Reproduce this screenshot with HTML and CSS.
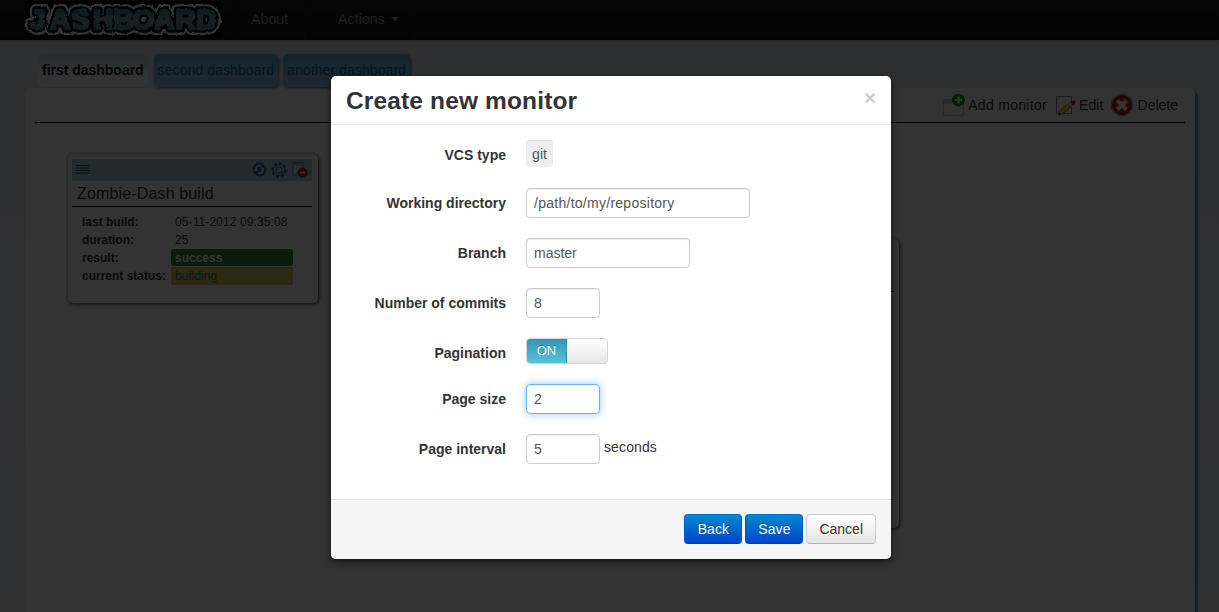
FILE: index.html
```html
<!DOCTYPE html>
<html lang="en">
<head>
<meta charset="utf-8">
<title>Jashboard</title>
<link rel="stylesheet" href="styles.css">
</head>
<body>
<header class="navbar">
  <svg class="logo" width="198" height="36" viewBox="0 0 198 36" role="img" aria-label="Jashboard">
    <defs>
      <linearGradient id="ice" x1="0" y1="0" x2="0" y2="1"><stop offset="0" stop-color="#2d7890"/><stop offset=".5" stop-color="#7ba0a8"/><stop offset="1" stop-color="#358099"/></linearGradient>
      <filter id="rough"><feTurbulence type="fractalNoise" baseFrequency=".2" numOctaves="2" seed="4"/><feDisplacementMap in="SourceGraphic" scale="3" xChannelSelector="R" yChannelSelector="G"/></filter>
    </defs>
    <rect width="198" height="36" fill="#000"/>
    <g class="logo-text" stroke-linejoin="round" filter="url(#rough)">
      <text x="5 25 46 68 88.500 107.500 129 150.500 171" y="28" stroke="#fff" stroke-width="12">JASHBOARD</text>
      <text x="5 25 46 68 88.500 107.500 129 150.500 171" y="28" stroke="#000" stroke-width="7.500">JASHBOARD</text>
      <text x="5 25 46 68 88.500 107.500 129 150.500 171" y="28" fill="url(#ice)" stroke="url(#ice)" stroke-width="2.600">JASHBOARD</text>
    </g>
  </svg>
  <nav class="nav">
    <a class="nav-item about">About</a>
    <a class="nav-item actions">Actions <span class="caret"></span></a>
  </nav>
</header>
<main class="dashboards">
  <div class="tabs">
    <a class="tab active">first dashboard</a>
    <a class="tab">second dashboard</a>
    <a class="tab">another dashboard</a>
  </div>
  <section class="panel">
    <div class="toolbar">
      <a class="tool"><svg width="23" height="23" viewBox="0 0 23 23"><rect x="1.500" y="5.500" width="20" height="16" rx="1.500" fill="#fff" stroke="#ccc"/><path d="M2 6h19v3c-8 0-14 0-19 2z" fill="#d5d5d5"/><circle cx="16.500" cy="6" r="6" fill="#159515" stroke="#087008" stroke-width=".7"/><path d="M16.500 2.500v7M13 6h7" stroke="#fff" stroke-width="2.200"/></svg>Add monitor</a>
      <a class="tool edit"><svg width="21" height="22" viewBox="0 0 21 22"><rect x="1.500" y="2.500" width="15" height="17" fill="#fff" stroke="#888"/><path d="M3.500 21l1-3.500L15 8l3 3L7 20.500z" fill="#e8c520" stroke="#776000" stroke-width=".8"/><path d="M5 18.500l11-9" stroke="#fff27a"/><path d="M13 9.500l2.500-2.200 3 3-2.500 2.200z" fill="#dfe5ea"/><path d="M15 8l2-1.500 3.500.5-.5 3-1.800 1.400z" fill="#cc1717"/><path d="M3.500 21l.8-2.500 1.600 1.500z" fill="#333"/></svg>Edit</a>
      <a class="tool delete"><svg width="24" height="24" viewBox="0 0 24 24"><circle cx="12" cy="12" r="11" fill="#ddd" stroke="#999"/><circle cx="12" cy="12" r="9.400" fill="#c9151b" stroke="#8d0000"/><path d="M7.500 7.500l9 9M16.500 7.500l-9 9" stroke="#fff" stroke-width="4"/></svg>Delete</a>
    </div>
    <div class="canvas">
      <article class="monitor build">
        <div class="monitor-bar">
          <svg width="14" height="9" viewBox="0 0 14 9"><path d="M0 .5h14M0 3h14M0 5.500h14M0 8h14" stroke="#23607a" stroke-width="1.100"/></svg>
          <div class="monitor-icons">
            <svg width="15" height="15" viewBox="0 0 15 15"><circle cx="7.500" cy="7.500" r="6.800" fill="#3268a8" stroke="#7898b8"/><path d="M4 9A4 4 0 0 1 9.500 4M11 6A4 4 0 0 1 6 11" fill="none" stroke="#d5e7f5" stroke-width="2"/><path d="M8.500 5.500h4L10.500 9z" fill="#d5e7f5"/><path d="M2.200 9h4L4.500 5.500z" fill="#d5e7f5"/></svg>
            <svg width="16" height="16" viewBox="0 0 16 16"><circle cx="8" cy="8" r="6.600" fill="none" stroke="#245e91" stroke-width="2.400" stroke-dasharray="2.600 2.584"/><circle cx="8" cy="8" r="4.300" fill="none" stroke="#245e91" stroke-width="3.400"/><circle cx="8" cy="8" r="4.300" fill="none" stroke="#8ccbe8" stroke-width="2"/></svg>
            <svg width="17" height="17" viewBox="0 0 17 17"><path d="M1 1.500h12M2 3v11h10V3z" fill="#b7d2e6" stroke="#6890ad" stroke-width="1.200"/><path d="M4 4v9M7 4v9" stroke="#fff"/><circle cx="11.500" cy="11.500" r="4.600" fill="#d42115" stroke="#8d0d05" stroke-width=".7"/><path d="M8.800 11.500h5.400" stroke="#fff" stroke-width="1.800"/></svg>
          </div>
        </div>
        <h4 class="monitor-title">Zombie-Dash build</h4>
        <dl class="facts">
          <dt>last build:</dt><dd class="date">05-11-2012 09:35:08</dd>
          <dt>duration:</dt><dd>25</dd>
          <dt>result:</dt><dd class="success">success</dd>
          <dt>current status:</dt><dd class="building">building</dd>
        </dl>
      </article>
      <article class="monitor vcs"><div class="vcs-rule"></div></article>
    </div>
  </section>
</main>
<div class="backdrop"></div>
<div class="modal">
  <div class="modal-header"><h3>Create new monitor</h3><a class="close">×</a></div>
  <form class="modal-body">
    <div class="row vcs-row"><label>VCS type</label><span class="chip">git</span></div>
    <div class="row"><label>Working directory</label><div class="field wide">/path/to/my/repository</div></div>
    <div class="row"><label>Branch</label><div class="field medium">master</div></div>
    <div class="row"><label>Number of commits</label><div class="field">8</div></div>
    <div class="row switch-row"><label>Pagination</label><div class="switch"><span class="switch-on">ON</span></div></div>
    <div class="row"><label>Page size</label><div class="field focused">2</div></div>
    <div class="row"><label>Page interval</label><div class="field">5</div><span class="unit">seconds</span></div>
  </form>
  <div class="modal-footer"><a class="btn primary">Back</a><a class="btn primary">Save</a><a class="btn">Cancel</a></div>
</div>
</body>
</html>
```
FILE: styles.css
```css
* { box-sizing: border-box; }
body { margin: 0; height: 612px; overflow: hidden; font: 14px/20px "Liberation Sans", Arial, sans-serif; color: #333; background: linear-gradient(#e3e8f0 40px, #f2f5fa 612px); position: relative; }
.navbar { height: 40px; display: flex; background: linear-gradient(#222, #111); padding-left: 25px; box-shadow: 0 1px 3px rgba(0,0,0,.25); }
.logo { margin-top: 1px; }
.logo-text { font: bold 28px "Liberation Sans", Arial, sans-serif; }
.nav { display: flex; margin-left: 13px; }
.nav-item { padding: 9px 15px 11px; color: #999; border-left: 1px solid #111; border-right: 1px solid #222; }
.about { width: 69px; padding-left: 14px; letter-spacing: .15px; }
.actions { padding-left: 32px; letter-spacing: .15px; }
.caret { display: inline-block; margin-left: 2px; vertical-align: 3px; border: 4px solid transparent; border-top-color: #999; border-bottom: 0; }
.dashboards { padding: 14px 24px 0 25px; height: 572px; }
.tabs { display: flex; gap: 5px; padding-left: 13px; height: 34px; position: relative; z-index: 1; }
.tab { height: 33px; padding: 6px 4px; border-radius: 5px; color: #0079b5; background: linear-gradient(#62b2dc, #9ac4df); box-shadow: 1px 1px 3px #2b83ac; letter-spacing: .08px; white-space: nowrap; }
.tab.active { color: #222; font-weight: bold; background: linear-gradient(#c2dcea, #fff 26px); box-shadow: none; letter-spacing: -.02px; margin-right: 1px; }
.panel { height: 540px; background: #fff; border-radius: 6px; box-shadow: 3px 3px 2px #4ba1c0; padding: 0 10px; }
.toolbar { height: 35px; border-bottom: 1px solid #000; display: flex; justify-content: flex-end; gap: 9px; padding: 4px 7px 0 0; }
.tool { display: flex; align-items: center; gap: 2px; height: 26px; letter-spacing: .3px; }
.tool:first-child { gap: 3px; margin-right: -1px; }
.tool svg { display: block; }
.tool.edit { gap: 3px; letter-spacing: .1px; }
.tool.delete { gap: 4px; margin-left: -3px; letter-spacing: 0; }
.canvas { position: relative; height: 489px; }
.monitor { position: absolute; background: #fff; border-radius: 5px; box-shadow: 1px 1px 4px #333; padding: 5px; }
.build { left: 33px; top: 31px; width: 250px; height: 149px; padding: 5px 6px 5px 4px; }
.monitor-bar { height: 22px; background: #acd3e3; display: flex; align-items: center; justify-content: space-between; padding: 0 4px 1px 4px; }
.monitor-icons { display: flex; align-items: center; gap: 4px; }
.monitor-title { font-size: 16px; font-weight: normal; line-height: 20px; height: 26px; margin: 0; padding: 3px 5px; border-bottom: 1px solid #000; white-space: nowrap; letter-spacing: .15px; }
.facts { display: grid; grid-template-columns: 89px 122px; grid-auto-rows: 18px; margin: 6px 0 0 10px; font-size: 12px; line-height: 18px; }
.facts dt { font-weight: bold; white-space: nowrap; }
.facts dd { margin: 0; padding-left: 4px; white-space: nowrap; }
.facts .date { letter-spacing: .1px; }
.facts .success { background: #398439; color: #fff; border-radius: 3px; font-weight: bold; height: 17px; }
.facts .building { background: #dfc65c; color: #23829c; letter-spacing: .12px; }
.vcs { left: 565px; top: 116px; width: 299px; height: 289px; }
.vcs-rule { border-bottom: 1px solid #000; height: 48px; }
.backdrop { position: absolute; inset: 0; background: #000; opacity: .8; z-index: 5; }
.modal { position: absolute; z-index: 6; left: 331px; top: 76px; width: 560px; height: 482.500px; background: #fff; border-radius: 5px; box-shadow: 0 3px 7px rgba(0,0,0,.6); overflow: hidden; display: flex; flex-direction: column; }
.modal-header { height: 49px; padding: 10px 15px 8px; border-bottom: 1px solid #eee; display: flex; justify-content: space-between; }
.modal-header h3 { margin: 0; font-size: 24.5px; line-height: 30px; letter-spacing: .14px; }
.close { font-size: 20px; font-weight: bold; line-height: 25px; color: #ccc; }
.modal-body { margin: 0; flex: 1; padding: 13px 15px; }
.row { display: flex; height: 30px; margin-bottom: 20px; }
.row label { width: 160px; margin-right: 20px; padding-top: 5px; text-align: right; font-weight: bold; line-height: 20px; }
.row.vcs-row { height: 29px; margin-bottom: 21px; }
.row.vcs-row label { padding-top: 7px; }
.chip { align-self: flex-start; margin-top: 2px; height: 27px; background: #eee; border-radius: 4px; padding: 4px 6px; color: #555; box-shadow: inset 0 1px 1px rgba(0,0,0,.07); letter-spacing: .1px; }
.field { width: 74px; height: 30px; padding: 4px 7px; border: 1px solid #ccc; border-radius: 4px; color: #555; box-shadow: inset 0 1px 1px rgba(0,0,0,.075); }
.field.wide { width: 224px; letter-spacing: .27px; }
.field.medium { width: 164px; }
.field.focused { border-color: #6cb4ef; box-shadow: inset 0 1px 1px rgba(0,0,0,.075), 0 0 8px rgba(82,168,236,.6); }
.unit { margin-left: 4px; padding-top: 3px; letter-spacing: .12px; }
.row.switch-row { margin-bottom: 16px; }
.switch { width: 82px; height: 26px; border: 1px solid #d4d4d4; border-radius: 4px; background: linear-gradient(#fff, #e6e6e6); overflow: hidden; }
.switch-on { display: block; width: 40px; height: 24px; border-right: 1px solid #318fae; background: linear-gradient(#2f96b4, #5bc0de); color: #fff; font-size: 13px; line-height: 24px; text-align: center; text-shadow: 0 -1px 0 rgba(0,0,0,.25); }
.modal-footer { height: 60px; border-top: 1px solid #e2e2e2; background: #f5f5f5; box-shadow: inset 0 1px 0 #fff; padding: 14px 15px 0; display: flex; justify-content: flex-end; gap: 3px; }
.btn { height: 30px; padding: 4px 12px; border: 1px solid #ccc; border-bottom-color: #b3b3b3; border-radius: 4px; background: linear-gradient(#fff, #e6e6e6); color: #333; text-shadow: 0 1px 1px rgba(255,255,255,.75); }
.btn.primary { width: 58px; padding: 4px 0; text-align: center; letter-spacing: .1px; color: #fff; background: linear-gradient(#08c, #04c); border-color: #0070cc #0055cc #003bb3; text-shadow: 0 -1px 0 rgba(0,0,0,.25); }
```
